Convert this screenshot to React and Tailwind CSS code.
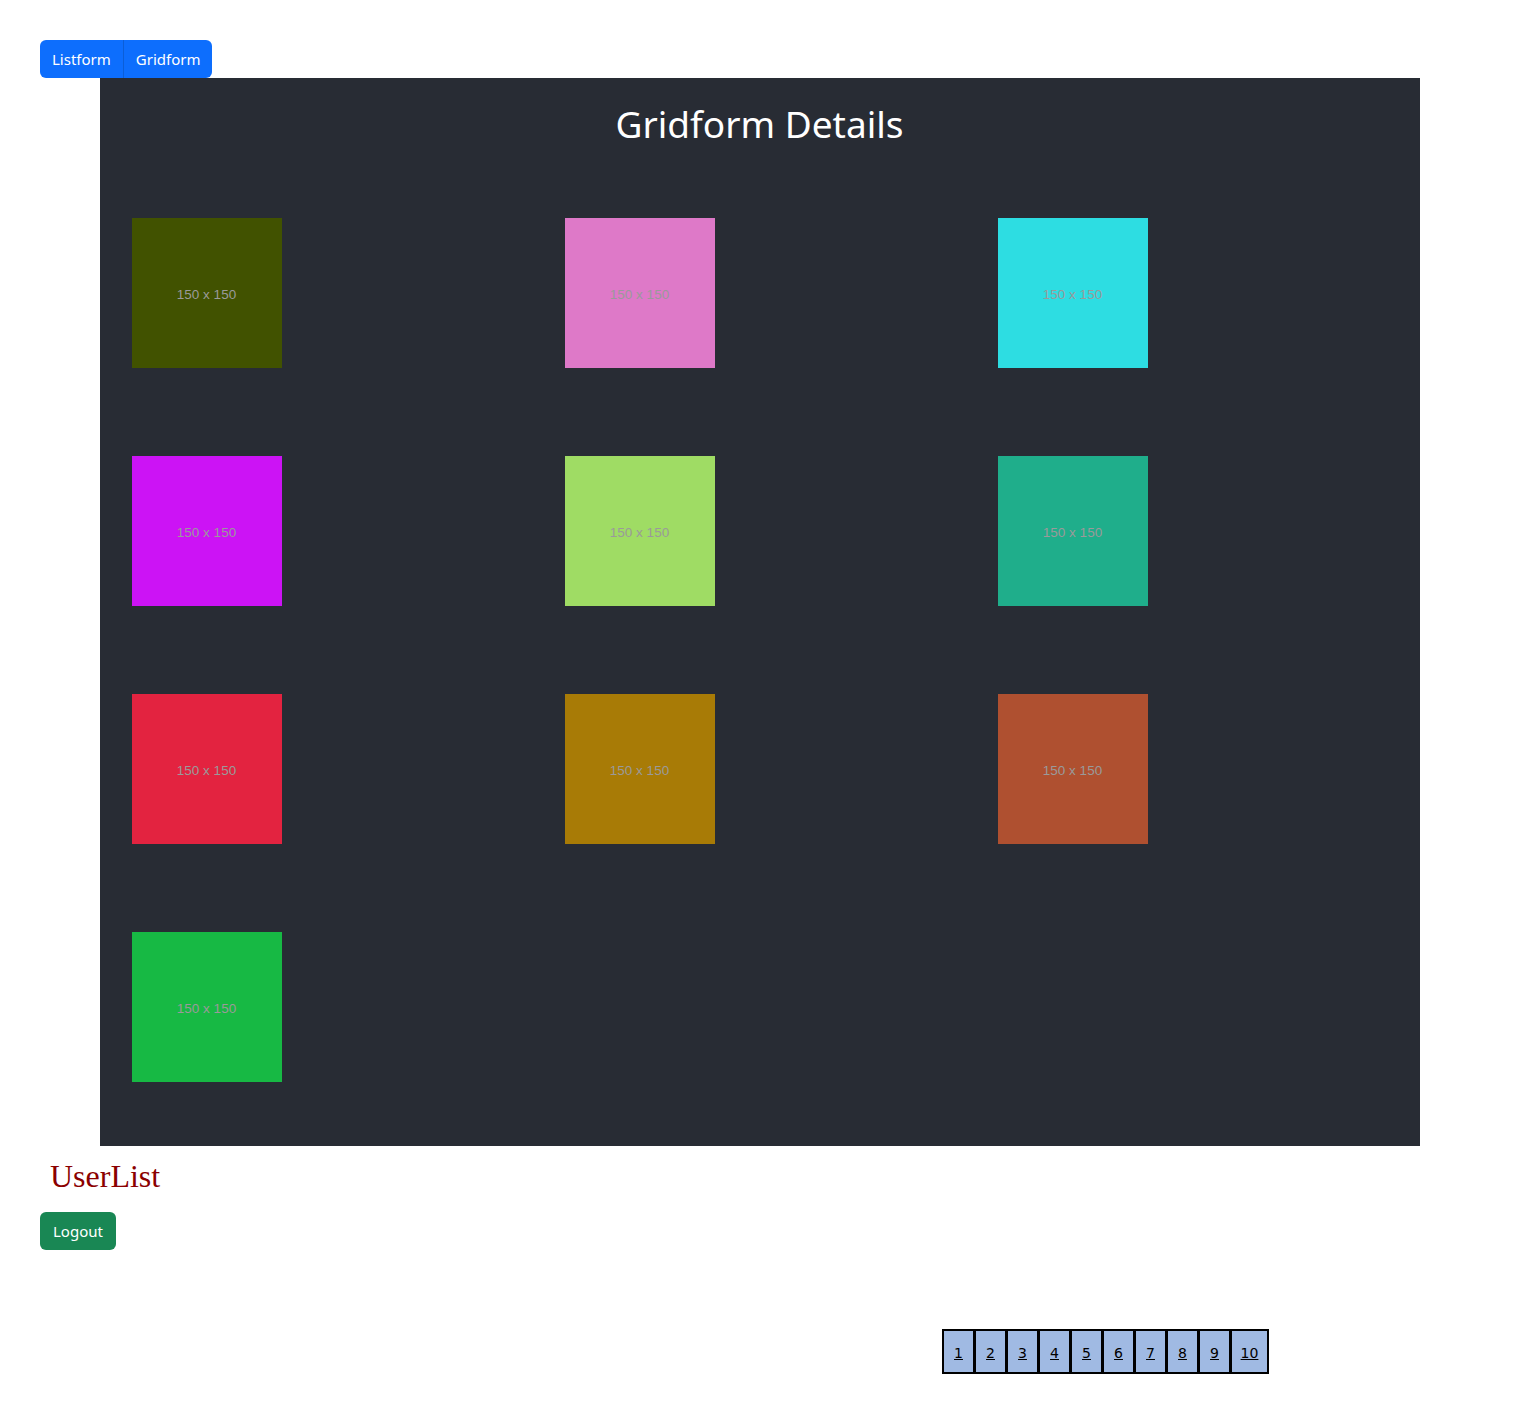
import React from "react";

const tiles = [
  "bg-[#415200]",
  "bg-[#de79c8]",
  "bg-[#2ddde2]",
  "bg-[#cc13f5]",
  "bg-[#9fdc64]",
  "bg-[#1fae8b]",
  "bg-[#e32340]",
  "bg-[#a87b06]",
  "bg-[#af5030]",
  "bg-[#17b944]",
];

const pages = [1, 2, 3, 4, 5, 6, 7, 8, 9, 10];

export default function App() {
  return (
    <div className="min-h-[1414px] bg-white font-['Noto_Sans',sans-serif]">
      <div className="flex pl-[40px] pt-[40px]">
        <button className="h-[38px] rounded-l-[6px] border-r border-[#0b5ed7] bg-[#0d6efd] px-[12px] text-[15px] text-white">
          Listform
        </button>
        <button className="h-[38px] rounded-r-[6px] bg-[#0d6efd] px-[12px] text-[15px] text-white">
          Gridform
        </button>
      </div>

      <div className="mx-auto w-[1320px] bg-[#282c34] pb-[64px] pt-[16px]">
        <h1 className="text-center text-[37px] leading-[60px] text-white">Gridform Details</h1>
        <div className="mt-[64px] grid grid-cols-[433px_433px_433px] gap-y-[88px] pl-[32px]">
          {tiles.map((color, i) => (
            <div
              key={i}
              className={`${color} flex h-[150px] w-[150px] items-center justify-center pt-[4px] font-['Liberation_Sans',sans-serif] text-[13.5px] text-[#9a9a9a]`}
            >
              150 x 150
            </div>
          ))}
        </div>
      </div>

      <h2 className="ml-[50px] mt-[10px] font-['Liberation_Serif',serif] text-[32px] leading-[40px] text-[#8b0000]">
        UserList
      </h2>
      <button className="ml-[40px] mt-[16px] h-[38px] rounded-[6px] bg-[#198754] px-[13px] text-[15px] text-white">
        Logout
      </button>

      <div className="ml-[942px] mt-[79px] flex w-fit gap-[3px] border-2 border-black bg-black">
        {pages.map((p) => (
          <a
            key={p}
            href="#"
            className={`${p === 10 ? "w-[35px]" : "w-[29px]"} flex h-[41px] items-center justify-center bg-[#a0bae3] pt-[3px] font-['DejaVu_Sans',sans-serif] text-[14px] text-black underline`}
          >
            {p}
          </a>
        ))}
      </div>
    </div>
  );
}
